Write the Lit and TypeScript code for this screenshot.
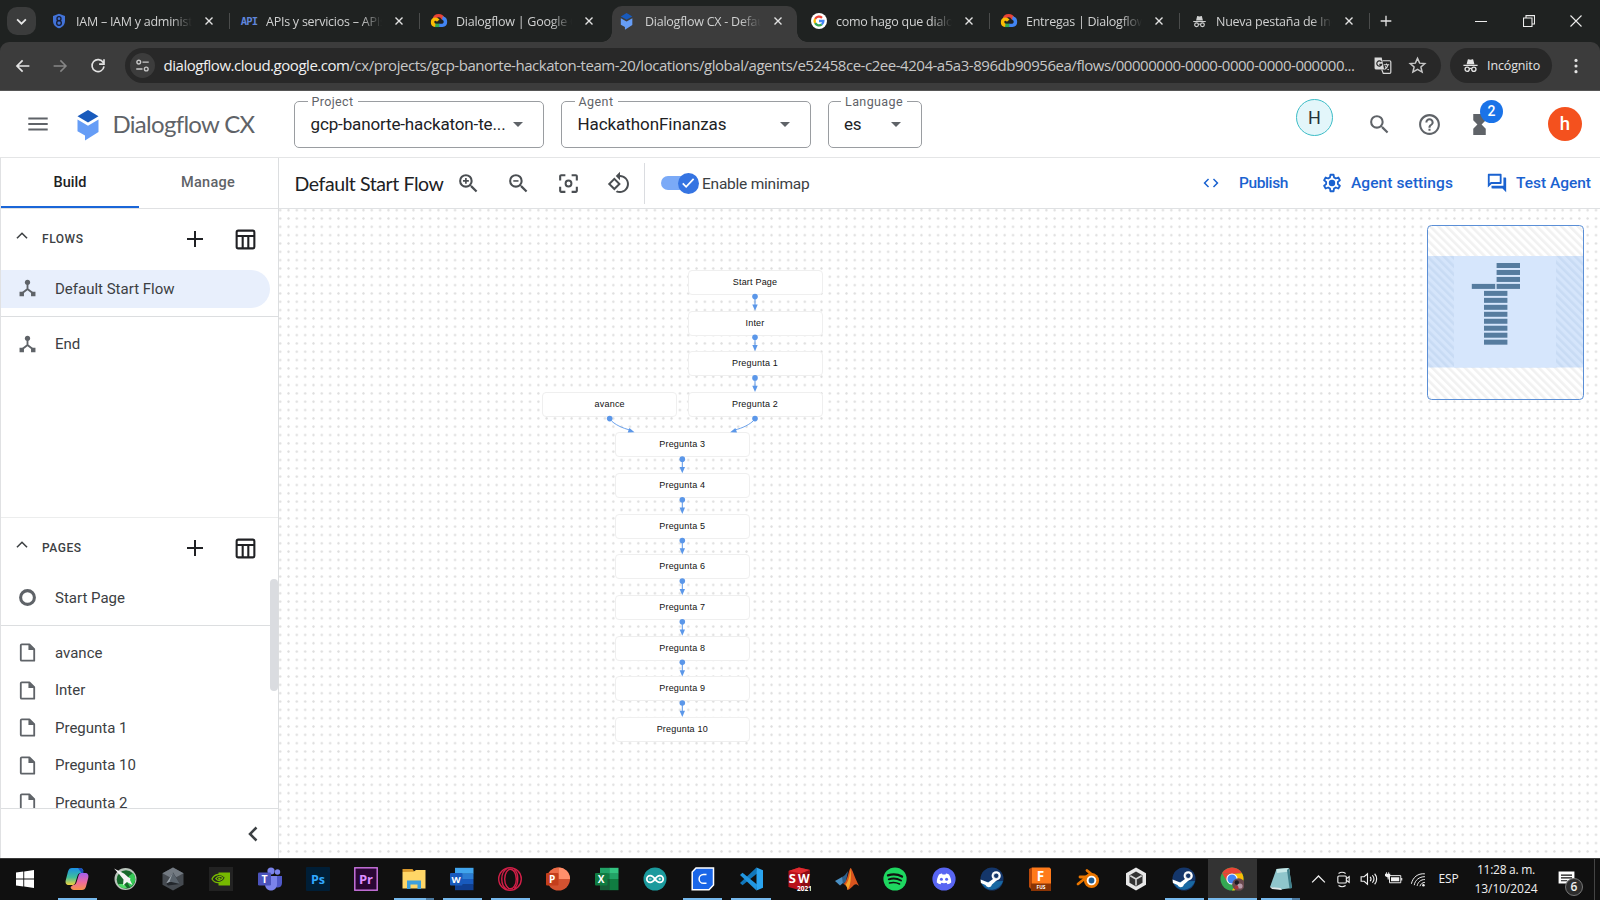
import { LitElement, html, svg, css } from "lit";
import { customElement, property, query } from "lit/decorators.js";
import { classMap } from "lit/directives/class-map.js";
import { styleMap } from "lit/directives/style-map.js";

/** Single line of text whose tracking is adjusted so that it fills `span` pixels. */
@customElement("fit-label")
class FitLabel extends LitElement {
  @property({ type: Number }) span = 0;
  @query(".line") line!: HTMLElement;
  static styles = css`
    :host { display: inline-block; white-space: nowrap; }
    .line { display: inline-block; }
  `;
  firstUpdated() {
    requestAnimationFrame(() => {
      const natural = this.line.getBoundingClientRect().width;
      const count = (this.textContent ?? "").trim().length || 1;
      this.line.style.letterSpacing = `${(this.span - natural) / count}px`;
    });
  }
  render() {
    return html`<span class="line"><slot></slot></span>`;
  }
}

const fit = (span: number, text: string) => html`<fit-label span=${span}>${text}</fit-label>`;

const icon = (size: number, body: unknown, box = 24) => html`
  <svg width=${size} height=${size} viewBox="0 0 ${box} ${box}" fill="currentColor">${body}</svg>`;

const LENS = "M15.5 14h-.79l-.28-.27A6.471 6.471 0 0 0 16 9.5 6.5 6.5 0 1 0 9.5 16c1.61 0 3.09-.59 4.23-1.57l.27.28v.79l5 4.99L20.49 19l-4.99-5zm-6 0C7.01 14 5 11.99 5 9.5S7.01 5 9.5 5 14 7.01 14 9.5 11.99 14 9.5 14z";

const g = {
  search: svg`<path d=${LENS}/>`,
  zoomIn: svg`<path d=${LENS}/><path d="M12.3 10.3h-2v2H8.7v-2h-2V8.7h2v-2h1.6v2h2z"/>`,
  zoomOut: svg`<path d=${LENS}/><path d="M7 8.8h5v1.5H7z"/>`,
  focus: svg`<path d="M5 15H3v4c0 1.100.9 2 2 2h4v-2H5v-4zM5 5h4V3H5c-1.100 0-2 .9-2 2v4h2V5zm14-2h-4v2h4v4h2V5c0-1.100-.9-2-2-2zm0 16h-4v2h4c1.100 0 2-.9 2-2v-4h-2v4z"/><circle cx="12" cy="12" r="2.800" fill="none" stroke="currentColor" stroke-width="1.900"/>`,
  rotate: svg`<path d="M7.340 6.410L.86 12.900l6.490 6.480 6.490-6.480-6.500-6.490zM3.690 12.900l3.660-3.660L11 12.900l-3.660 3.660-3.650-3.660zm15.670-6.260C17.610 4.880 15.300 4 13 4V.76L8.760 5 13 9.240V6c1.790 0 3.580.68 4.950 2.050 2.730 2.730 2.730 7.170 0 9.900C16.580 19.320 14.790 20 13 20c-.97 0-1.940-.21-2.840-.61l-1.490 1.490C10.020 21.620 11.510 22 13 22c2.300 0 4.610-.88 6.360-2.640 3.520-3.510 3.520-9.210 0-12.720z"/>`,
  code: svg`<path d="M9.400 16.600L4.800 12l4.600-4.600L8 6l-6 6 6 6 1.400-1.400zm5.200 0l4.600-4.600-4.600-4.600L16 6l6 6-6 6-1.400-1.400z"/>`,
  gear: svg`<path fill="none" stroke="currentColor" stroke-width="2" stroke-linejoin="round" d="M10.300 3h3.400l.5 2.900 2 1.200 2.700-1.100 1.700 3-2.200 1.800v2.400l2.200 1.800-1.700 3-2.700-1.100-2 1.200-.5 2.900h-3.400l-.5-2.900-2-1.200L5.100 18l-1.700-3 2.200-1.800v-2.400L3.400 9l1.700-3 2.700 1.100 2-1.200z"/><circle cx="12" cy="12" r="3.500"/>`,
  forum: svg`<path d="M15 4v7H5.170L4 12.170V4h11m1-2H3c-.55 0-1 .45-1 1v14l4-4h10c.55 0 1-.45 1-1V3c0-.55-.45-1-1-1zm5 4h-2v9H6v2c0 .55.45 1 1 1h11l4 4V7c0-.55-.45-1-1-1z"/>`,
  help: svg`<path d="M11 18h2v-2h-2v2zm1-16C6.480 2 2 6.480 2 12s4.480 10 10 10 10-4.480 10-10S17.520 2 12 2zm0 18c-4.410 0-8-3.590-8-8s3.590-8 8-8 8 3.590 8 8-3.590 8-8 8zm0-14c-2.210 0-4 1.790-4 4h2c0-1.100.9-2 2-2s2 .9 2 2c0 2-3 1.750-3 5h2c0-2.250 3-2.500 3-5 0-2.210-1.790-4-4-4z"/>`,
  hourglass: svg`<path d="M6 2v6l4 4-4 4v6h12v-6l-4-4 4-4V2z"/>`,
  menu: svg`<path d="M2.300 5.600h19.400v2H2.300zm0 5.400h19.400v2H2.300zm0 5.500h19.400v2H2.300z"/>`,
  plus: svg`<path d="M11 4h2v7h7v2h-7v7h-2v-7H4v-2h7z"/>`,
  table: svg`<g fill="none" stroke="currentColor" stroke-width="2"><rect x="3.500" y="3.500" width="17" height="17" rx="1.500"/><path d="M3.500 8.700h17M9.300 9v11.500M14.700 9v11.500"/></g>`,
  flow: svg`<circle cx="12" cy="5.500" r="2.700"/><path d="M3.700 15.500h4.600V20H3.700zM15.700 15.500h4.600V20h-4.600z"/><path d="M12 7v5.500L6 17.300M12 12.500l6 4.800" fill="none" stroke="currentColor" stroke-width="1.900"/>`,
  file: svg`<path d="M6 3.500h8l5 5v12H6a1 1 0 0 1-1-1v-15a1 1 0 0 1 1-1z" fill="none" stroke="currentColor" stroke-width="1.900" stroke-linejoin="round"/><path d="M13 3v6.500h6.500z"/>`,
  ring: svg`<circle cx="12" cy="12" r="7.200" fill="none" stroke="currentColor" stroke-width="3.200"/>`,
  up: svg`<path d="M6.500 14.500l5.500-5.500 5.500 5.500" fill="none" stroke="currentColor" stroke-width="1.700"/>`,
  left: svg`<path d="M15.500 5.500L9 12l6.500 6.500" fill="none" stroke="currentColor" stroke-width="2.500"/>`,
  close: svg`<path d="M6 6l12 12M18 6L6 18" stroke="currentColor" stroke-width="2.400"/>`,
  incognito: svg`<path d="M8.200 3.500c1.200-.6 2.300.5 3.800.5s2.600-1.100 3.800-.5l1.700 6.700h-11zM2 11h20v1.800H2z"/><g fill="none" stroke="currentColor" stroke-width="1.900"><circle cx="7.300" cy="17.200" r="3"/><circle cx="16.700" cy="17.200" r="3"/><path d="M10.300 16.600c1-.7 2.400-.7 3.400 0"/></g>`,
  dialogflow: svg`<path fill="#185abc" d="M12 0l10.500 6.200L12 12.500 1.500 6.200z"/><path fill="#669df6" d="M1.500 9.600L12 15.700l10.500-6.100V22L9 30.500v-5L1.500 21.300z"/>`,
  cloud: svg`<g fill="none" stroke-width="4.600"><path stroke="#ea4335" d="M6 8.500C7.500 4 15 3 17.500 9"/><path stroke="#4285f4" d="M16.500 8c5.500 1 5.500 9.500 0 9.800H12"/><path stroke="#34a853" d="M12.500 17.800H6.500"/><path stroke="#fbbc04" d="M7 17.800C2 17 2.500 9.500 7 9.500c2 0 3 .8 4 2"/></g>`,
  shield: svg`<path fill="#4273d8" d="M12 1l9 3.500V12c0 5.500-4 9.500-9 11-5-1.500-9-5.500-9-11V4.500z"/><g fill="none" stroke="#151d35" stroke-width="2"><circle cx="12" cy="8.500" r="3"/><circle cx="12" cy="15" r="3.500"/></g>`,
  google: svg`<circle cx="12" cy="12" r="12" fill="#fff"/><g fill="none" stroke-width="3.400"><path stroke="#ea4335" d="M6.200 8.800A6.700 6.700 0 0 1 16.500 7.200"/><path stroke="#fbbc04" d="M6.200 8.800a6.700 6.700 0 0 0 0 6.400"/><path stroke="#34a853" d="M6.200 15.200a6.700 6.700 0 0 0 10 1.900"/><path stroke="#4285f4" d="M16.200 17.100A6.500 6.500 0 0 0 18.600 12H12"/></g>`,
};

const steamArt = svg`<circle cx="12" cy="12" r="11.500" fill="#14366a"/><path d="M1 15a11.500 11.500 0 0 0 22-1z" fill="#1b7dba" opacity=".7"/><path d="M.6 12.500l7.600 3 5.800-4.200 2.800 2-4.800 4.200a3.400 3.400 0 0 1-6.500.6L.9 16z" fill="#fff"/><circle cx="16.200" cy="8.800" r="4.600" fill="#fff"/><circle cx="16.200" cy="8.800" r="2.700" fill="#14366a" stroke="#fff" stroke-width=".8"/>`;

const apps: { art: unknown; open?: boolean; active?: boolean; stacked?: boolean }[] = [
  { open: true, art: svg`<defs><linearGradient id="cpa" x1="0" y1="0" x2="0" y2="1"><stop offset="0" stop-color="#1b8fe6"/><stop offset=".55" stop-color="#3fbf9b"/><stop offset="1" stop-color="#f2d23c"/></linearGradient><linearGradient id="cpb" x1="0" y1="0" x2="0" y2="1"><stop offset="0" stop-color="#a45ff0"/><stop offset=".55" stop-color="#f06a9c"/><stop offset="1" stop-color="#f7934a"/></linearGradient></defs><path fill="url(#cpa)" d="M7 1h8c2 0 3 1 3.500 3L16 6c-2 0-3 1-3.600 3l-2 6.500C9.800 17.500 8.500 18 7 18H4c-2.800 0-4-2-3.200-5L3 4.500C3.700 2 5 1 7 1z"/><path fill="url(#cpb)" d="M17 6h3c2.800 0 4 2 3.200 5L21 19.500c-.7 2.500-2 3.500-4 3.500H9c-2 0-3-1-3.500-3L8 18c2 0 3-1 3.600-3l2-6.500C14.200 6.500 15.500 6 17 6z"/><path fill="#1d4fbd" d="M13 1h2c2 0 3 1 3.500 5h-2z"/>` },
  { art: svg`<circle cx="12.500" cy="12" r="11" fill="#b9c4bb"/><circle cx="13" cy="12.500" r="9.300" fill="#17692c"/><path d="M20 6a9 9 0 0 1-3 14l-3-5 2-6z" fill="#35c955"/><path d="M5 17c2 4 6 5 9 4l-3-4z" fill="#51dd68"/><path fill="#f4f4f4" d="M1 1.500l10 5 4 3.500 2.500 1.500-.5 1.500 2.500 5-5.500-3-4 3.500.5-6-4-5z"/>` },
  { art: svg`<path fill="#454a50" d="M12 .5l10.500 5.700v11.600L12 23.500 1.500 17.800V6.200z"/><path fill="#737a82" d="M12 .5l10.500 5.700L12 12 1.500 6.200z"/><path fill="#23272c" d="M12 5.500l7 11.500-12 1.500-2-2z"/><path fill="#9aa3ab" d="M12 5.500L5 16.500l7-3z"/><path fill="#5a636c" d="M12 5.500l-3.500 9L19 17z"/>` },
  { art: svg`<path fill="#222" d="M0 0h24v24H0z"/><path fill="#76b900" d="M9.500 5.500H21v13H9.500z"/><path d="M3 12c2.500-5.500 9-6 13.500-1.500C13 17 6 17 3 12zm3.800-.3c2-2.700 5-3 7-.8-1.800 3.200-5 3.400-7 .8z" fill="#222" stroke="#76b900" stroke-width="1.300"/><circle cx="10.300" cy="11.600" r="1.200" fill="#76b900"/>` },
  { art: svg`<circle cx="19.500" cy="5" r="2.700" fill="#7b83eb"/><circle cx="13" cy="4" r="3.600" fill="#7b83eb"/><path d="M17 9h7v7c0 3-2 4.500-4.500 4.500S16 18 16 16z" fill="#5059c9"/><path d="M7 9h12v8c0 4-2.500 6.500-6 6.500S7 21 7 17z" fill="#7b83eb"/><rect x="0" y="5.500" width="13" height="13" rx="1.300" fill="#4b53bc"/><text x="6.500" y="16" text-anchor="middle" class="lt" font-size="10.500" fill="#fff">T</text>` },
  { art: svg`<rect width="24" height="24" rx="1" fill="#001e36"/><text x="12" y="16.500" text-anchor="middle" class="lt" font-size="12.500" fill="#31a8ff">Ps</text>` },
  { art: svg`<rect x=".8" y=".8" width="22.400" height="22.400" fill="#2a0634" stroke="#d077e6" stroke-width="1.400"/><text x="12" y="16.500" text-anchor="middle" class="lt" font-size="13" fill="#dd8cff">Pr</text>` },
  { open: true, stacked: true, art: svg`<path fill="#d9982b" d="M.5 2h10l2 3H.5z"/><path fill="#ffd667" d="M.5 5l11-.2L14 3h9.500v18.500H.5z"/><path fill="#3d9fdc" d="M5 13.500h14V22h-3.500v-4.500h-7V22H5z"/>` },
  { open: true, art: svg`<path fill="#41a5ee" d="M5 .8h18.500v6H5z"/><path fill="#2b7cd3" d="M5 6.500h18.500V12H5z"/><path fill="#185abd" d="M5 12h18.500v5.700H5z"/><path fill="#103f91" d="M5 17.500h18.500v5.700H5z"/><rect x="0" y="6" width="12.500" height="12.500" rx="1" fill="#185abd"/><text x="6.200" y="15.800" text-anchor="middle" class="lt" font-size="9.500" fill="#fff">W</text>` },
  { open: true, art: svg`<g fill="none" stroke="#d21f48" stroke-width="1.400"><circle cx="12" cy="12" r="11.300"/><ellipse cx="12.500" cy="12" rx="5.800" ry="9.800"/><path d="M16 2.500c5 3 5 16 0 19M9 1.500c-7 4-7 17 0 21"/></g>` },
  { art: svg`<circle cx="12.500" cy="12" r="11.500" fill="#d35230"/><path fill="#ff8f6b" d="M12.500.5A11.500 11.500 0 0 1 24 12H12.500z"/><path fill="#ed6c47" d="M12.500.5V12H1A11.500 11.500 0 0 1 12.500.5z"/><rect x="0" y="6" width="12.500" height="12.500" rx="1" fill="#c43e1c"/><text x="6.200" y="16" text-anchor="middle" class="lt" font-size="10" fill="#fff">P</text>` },
  { art: svg`<path fill="#21a366" d="M5 .8h9.500v6H5z"/><path fill="#33c481" d="M14.300.8h9.200v6h-9.200z"/><path fill="#107c41" d="M5 6.700h9.500V12H5z"/><path fill="#21a366" d="M14.300 6.700h9.200V12h-9.200z"/><path fill="#185c37" d="M5 12h9.500v11.200H5z"/><path fill="#107c41" d="M14.300 12h9.200v11.200h-9.200z"/><rect x="0" y="6" width="12.500" height="12.500" rx="1" fill="#107c41"/><text x="6.200" y="15.800" text-anchor="middle" class="lt" font-size="10" fill="#fff">X</text>` },
  { art: svg`<circle cx="12" cy="12" r="11.500" fill="#1b9a9d"/><g fill="none" stroke="#fff" stroke-width="1.800"><path d="M12 12c-2-3-3.500-3.400-4.800-3.400a3.400 3.400 0 0 0 0 6.800c1.300 0 2.800-.4 4.800-3.400 2-3 3.500-3.400 4.800-3.400a3.400 3.400 0 0 1 0 6.800c-1.300 0-2.800-.4-4.800-3.400z"/></g><path d="M6 12h2.500M15.500 12H18M16.800 10.800v2.400" stroke="#fff" stroke-width=".8"/>` },
  { open: true, art: svg`<path fill="#1a66e8" stroke="#fff" stroke-width="1.500" d="M5 1h17.500v17L18 22.800H1.200V5z"/><path d="M15.500 7.500h-3a4.300 4.300 0 0 0 0 8.800h3" fill="none" stroke="#fff" stroke-width="1.500"/>` },
  { open: true, art: svg`<path fill="#1177bb" d="M17.500.5L1 16l2.500 2.200L18 6.500z"/><path fill="#2196e0" d="M17.500 23.500L1 8l2.500-2.200L18 17.500z"/><path fill="#2aa4f0" d="M17.500.5L24 3.200v17.600l-6.500 2.700z"/>` },
  { art: svg`<path fill="#b8121b" d="M1.500 4L12 .5 23 3v17l-9 3.500L1.500 20z"/><path fill="#df2a2f" d="M1.500 4L12 .5 23 3l-9 3.500z"/><path fill="#8f0d14" d="M14 6.500L23 3v17l-9 3.500z"/><text x="1.800" y="16" class="lt" font-size="13" fill="#fff">S</text><text x="11" y="15.500" class="lt" font-size="12" fill="#fff">W</text><text x="10" y="24" class="lt" font-size="6.500" fill="#fff">2021</text>` },
  { art: svg`<path fill="#4a90c4" d="M0 14l7-4 4 3.500-6 5z"/><path fill="#2f5f8c" d="M7 10c3-1 4-4 6-6l-2 10.500L8 17z"/><path fill="#d9541e" d="M15.500 1C17 1 19 9 24 19c-3-2.500-4-2-6.500.5C15 22 13.500 23 12.500 23c0-3-2-5.500-4-6 4-2 5-14 7-16z"/><path fill="#f5a52e" d="M15.500 1c-.5 5-1 12-5 17 1 1 2 2.500 2 5 3-4 4-12 3-22z"/>` },
  { art: svg`<circle cx="12" cy="12" r="11.600" fill="#1ed760"/><g fill="none" stroke="#111" stroke-linecap="round"><path d="M5 8.300c5-1.500 10-1 14 1.300" stroke-width="2.300"/><path d="M5.800 12.300c4.300-1.300 8.600-.8 12.200 1.200" stroke-width="1.900"/><path d="M6.500 16c3.600-1 7-.6 10 1" stroke-width="1.600"/></g>` },
  { art: svg`<circle cx="12" cy="12" r="11.600" fill="#5865f2"/><path fill="#fff" d="M7 7.500c1.500-.9 2.500-1 3-1l.5 1h3l.5-1c.5 0 1.500.1 3 1 1.500 2.500 2.300 5.200 2.200 8-1.200 1-2.400 1.500-3.700 1.800l-.8-1.500c-1.600.5-3.800.5-5.400 0l-.8 1.500c-1.300-.3-2.500-.8-3.700-1.800C4.700 12.700 5.500 10 7 7.500z"/><circle cx="9.400" cy="12.300" r="1.500" fill="#5865f2"/><circle cx="14.600" cy="12.300" r="1.500" fill="#5865f2"/>` },
  { art: steamArt },
  { art: svg`<path fill="#b9480a" d="M1 2l3-1.500V23L1 20z"/><path fill="#ff7a1a" d="M4 .5h17.500L23 2v21H4z"/><path fill="#8b3404" d="M3 16.500h20V24H3z"/><text x="12.500" y="14" text-anchor="middle" class="lt" font-size="13.500" fill="#fff">F</text><text x="13" y="22" text-anchor="middle" class="lt" font-size="4.800" fill="#fff">FUS</text>` },
  { art: svg`<path d="M2 17L14 7.500M4 10h9M11 3.500l8 6.500" stroke="#ea7600" stroke-width="2.800" stroke-linecap="round"/><circle cx="15.500" cy="13.500" r="7.600" fill="#ea7600"/><circle cx="15.500" cy="13.500" r="4.800" fill="#fff"/><circle cx="15.500" cy="13.500" r="2.900" fill="#1f5d93"/>` },
  { art: svg`<path fill="#e8e8e8" d="M12 .5l10 5.700v11.600l-10 5.700-10-5.700V6.200z"/><path fill="#333" d="M12 4.500l6.500 3.700v7.600L12 19.500l-6.500-3.700V8.200z"/><path d="M12 12v6.500M12 12L6.300 8.700M12 12l5.700-3.300" stroke="#d6d6d6" stroke-width="1.600" fill="none"/>` },
  { open: true, art: steamArt },
  { open: true, active: true, art: svg`<circle cx="12" cy="12" r="11.500" fill="#34a853"/><path fill="#ea4335" d="M2.100 6.200A11.500 11.500 0 0 1 22 6.200L12 7z"/><path fill="#ea4335" d="M2.100 6.200L7.500 15 12 7z"/><path fill="#fbbc04" d="M22 6.300A11.500 11.500 0 0 1 12 23.500l5-8.500-4-8z"/><circle cx="12" cy="12" r="5.600" fill="#fff"/><circle cx="12" cy="12" r="4.500" fill="#4285f4"/><circle cx="18.500" cy="17.500" r="6.300" fill="#6a4a4f"/><circle cx="16.800" cy="15.500" r="2.200" fill="#1c1a20"/><circle cx="20" cy="19" r="2.600" fill="#b79aa8"/><circle cx="16.500" cy="20.500" r="2" fill="#a3353d"/>` },
  { open: true, stacked: true, art: svg`<path fill="#8fc6cc" d="M7.500 2L20 1l3 20-11.500 1.500L1 20z"/><path fill="#c7e8e8" d="M7.500 2L20 1l.6 3.500L8 6z"/><path fill="#3f7f8a" d="M20 1l3 20-2.500.5L18 3z"/><path fill="#dfe9ea" d="M1 20l10.500 1 1.500 2L3 22z"/>` },
];

interface FlowNode { label: string; cx: number; cy: number; }
const STEP = 40.64;
const nodes: FlowNode[] = [
  ...["Start Page", "Inter", "Pregunta 1", "Pregunta 2"].map((label, i) => ({ label, cx: 755, cy: 282.1 + i * STEP })),
  { label: "avance", cx: 609.7, cy: 282.1 + 3 * STEP },
  ...[3, 4, 5, 6, 7, 8, 9, 10].map((n, i) => ({ label: `Pregunta ${n}`, cx: 682.3, cy: 282.1 + (i + 4) * STEP })),
];
const ORIGIN_X = 279, ORIGIN_Y = 209;

@customElement("app-root")
class AppRoot extends LitElement {
  static styles = css`
    :host { display: flex; flex-direction: column; width: 1600px; height: 900px; overflow: hidden; background: #fff; font-family: Roboto, "Liberation Sans", sans-serif; color: #202124; }
    * { box-sizing: border-box; }
    svg { display: block; flex: none; }
    .lt { font-family: "Open Sans", sans-serif; font-weight: 700; }
    .cell { display: flex; align-items: center; justify-content: center; flex: none; }

    .tabs { display: flex; height: 42px; flex: none; background: #1f2221; color: #d0d1d1; font: 12.500px/43px "Open Sans", sans-serif; }
    .tabmenu { width: 29px; height: 28px; margin: 7px 4px 0 7px; border-radius: 10px; background: #3b3c3c; color: #e8e8e8; }
    .tab { position: relative; display: flex; align-items: center; width: 190px; padding: 0 10px 0 11px; flex: none; }
    .tab .fav { width: 16px; margin-right: 9px; }
    .tab .name { width: 117px; overflow: hidden; white-space: nowrap; letter-spacing: -.25px; -webkit-mask-image: linear-gradient(90deg, #000 82%, transparent 100%); mask-image: linear-gradient(90deg, #000 82%, transparent 100%); }
    .tab .x { width: 22px; margin-left: 6px; color: #e3e3e3; }
    .tab.line::after { content: ""; position: absolute; right: 0; top: 13px; width: 1.500px; height: 16px; background: #4a4c4b; }
    .tab.on { height: 36px; margin: 6px -1px 0 2px; width: 185px; border-radius: 10px 10px 0 0; background: #3c3c3c; line-height: 31px; padding: 0 7px 6px 8px; }
    .tab.on .name { width: 116px; }
    .tab.on + .tab { margin-left: 4px; }
    .tab.on::before, .tab.on::after { content: ""; position: absolute; bottom: 0; width: 10px; height: 10px; }
    .tab.on::before { left: -10px; background: radial-gradient(circle at 0 0, transparent 9.500px, #3c3c3c 10px); }
    .tab.on::after { right: -10px; background: radial-gradient(circle at 100% 0, transparent 9.500px, #3c3c3c 10px); }
    .api { font: 700 10.500px/1 "DejaVu Sans Mono", monospace; color: #5f86dc; letter-spacing: -.8px; }
    .newtab { width: 32px; color: #e3e3e3; }
    .wins { display: flex; margin-left: auto; color: #ececec; }
    .wins .cell { width: 47.500px; height: 42px; }
    .toolbarwrap { background: #1f2221; flex: none; }
    .toolbar { display: flex; align-items: center; height: 49px; padding-bottom: 1px; background: #3c3c3c; border-bottom: 1px solid #565656; border-radius: 9px 9px 0 0; color: #e3e3e3; }
    .toolbar .nav { width: 37.500px; }
    .toolbar .nav:first-child { margin-left: 4px; }
    .dim { color: #868686; }
    .omni { display: flex; align-items: center; width: 1317px; height: 35px; margin-left: 8px; padding-left: 5px; border-radius: 18px; background: #282828; font: 15px/35px "Open Sans", sans-serif; color: #c7c7c7; }
    .omni b { font-weight: 400; color: #f0f0f0; }
    .omni .site { width: 25px; height: 25px; border-radius: 50%; background: #3c3c3c; margin-right: 9px; }
    .omni .url { width: 1201px; }
    .omni .act { width: 35px; }
    .incog { display: flex; align-items: center; width: 102px; height: 35px; margin-left: 9px; padding-left: 12px; border-radius: 18px; background: #282828; font: 12.500px/35px "Open Sans", sans-serif; gap: 8px; }
    .more { width: 48px; }

    .header { display: flex; align-items: center; height: 67px; flex: none; border-bottom: 1px solid #e4e5e6; background: #fff; color: #5f6368; }
    .burger { width: 48px; margin-left: 13.500px; }
    .brand { display: flex; align-items: center; margin-left: 14px; width: 218.500px; font: 24px/32px Lato, sans-serif; color: #5f6368; gap: 13px; }
    .brand svg { margin-top: 4px; }
    fieldset { display: flex; align-items: center; justify-content: space-between; height: 53px; margin: -6px 17px 0 0; padding: 0 20px 7px 15.500px; border: 1px solid #9a9da1; border-radius: 5px; font-size: 17px; color: #202124; min-width: 0; }
    .field { flex: none; width: 250px; }
    .field.lang { width: 94px; margin-left: -.500px; }
    legend { padding: 0 4px; margin-left: -3px; font-size: 12.500px; line-height: 14px; color: #5f6368; }
    .arrow { width: 0; border: 5px solid transparent; border-top-color: #5f6368; border-bottom: 0; }
    .hav { width: 37px; height: 37px; border: 1px solid #3dbdc7; border-radius: 50%; background: #e3f6fa; font-size: 18px; color: #263238; margin: -13px 34px 0 357.500px; }
    .hh { width: 24px; margin-right: 26px; }
    .wait { position: relative; width: 24px; margin-right: 57px; }
    .badge { position: absolute; left: 13px; top: -12px; width: 23px; height: 23px; border-radius: 50%; background: #1a73e8; color: #fff; font-size: 14px; font-weight: 500; }
    .me { width: 34px; height: 34px; border-radius: 50%; background: #f4511e; color: #fff; font-size: 18.500px; font-weight: 500; }

    .body { display: flex; flex: none; height: 700px; }
    .side { display: flex; flex-direction: column; width: 279px; flex: none; border-left: 1px solid #e0e1e3; border-right: 1px solid #dcdee0; color: #3c4043; font-size: 15px; }
    .modes { display: flex; height: 51px; flex: none; border-bottom: 1px solid #e0e1e3; font: 500 14.500px/50px Roboto, sans-serif; color: #5f6368; text-align: center; }
    .modes div { width: 138px; height: 50px; }
    .modes .on { border-bottom: 2.500px solid #1a66d8; color: #202124; }
    .sec { display: flex; align-items: center; height: 60px; margin-bottom: 1px; flex: none; padding-left: 9px; font-size: 12px; font-weight: 500; }
    .sec .up { width: 24px; margin: -7px 8px 0 0; }
    .sec .nm { width: 142px; flex: none; }
    .sec .ac { width: 22px; margin-right: 28px; color: #202124; }
    .row { display: flex; align-items: center; height: 37.500px; flex: none; padding-left: 15px; color: #3c4043; }
    .row svg { margin-right: 16px; color: #5f6368; }
    .row.on { width: 269px; background: #e8effc; border-radius: 0 19px 19px 0; }
    .rule { height: 1px; flex: none; background: #dcdee0; }
    .flows { height: 309px; flex: none; border-bottom: 1px solid #eceded; }
    .flows .rule { margin: 8.500px 0; }
    .pages { display: flex; flex-direction: column; height: 291px; flex: none; overflow: hidden; border-bottom: 1px solid #dcdee0; }
    .list { position: relative; display: flex; flex-direction: column; flex: 1; overflow: hidden; }
    .list .rule { margin: 8px 8px 8.500px 0; }
    .thumb { position: absolute; right: 0; top: 0; width: 8px; height: 112px; border-radius: 4px; background: #dadce0; }
    .foot { display: flex; align-items: center; justify-content: flex-end; flex: 1; padding-right: 13px; }

    .main { display: flex; flex-direction: column; flex: 1; min-width: 0; }
    .bar { display: flex; align-items: center; height: 51px; flex: none; border-bottom: 1px solid #dfe1e3; padding-left: 15.500px; color: #4a4e52; }
    .title { width: 161px; font: 19.500px/51px Lato, sans-serif; color: #202124; }
    .tool { width: 26px; margin-right: 24px; }
    .vr { width: 1px; height: 41px; background: #dadce0; margin: 0 16px 0 -11.500px; }
    .toggle { position: relative; width: 32px; height: 14.500px; border-radius: 8px; background: #7baaf7; margin-right: 9px; }
    .knob { position: absolute; left: 16.500px; top: -3px; width: 21px; height: 21px; border-radius: 50%; background: #3574e2; }
    .mini-t { width: 498px; font-size: 15.500px; line-height: 20px; padding-top: 1px; color: #3c4043; }
    .act-t { display: flex; align-items: center; flex: none; font: 500 15.500px/50px Roboto, sans-serif; color: #1a62d0; }
    .act-t .ic { width: 22px; }
    .a0 { margin-right: 17px; } .a1 { margin-right: 33px; } .a2 { margin-right: 33px; gap: 8px; } .a3 { gap: 8px; }

    .canvas { position: relative; flex: 1; background: #fff radial-gradient(circle, #dedede 0, #e1e1e1 .9px, transparent 1.500px) -3px -3px / 8.333px 8.333px; }
    .edges { position: absolute; left: 0; top: 0; }
    .node { position: absolute; width: 135px; height: 25px; border: 1px solid #efefef; border-radius: 4px; background: #fff; font: 9px/23px "Liberation Sans", sans-serif; letter-spacing: .2px; text-align: center; color: #111; }
    .minimap { position: absolute; right: 16px; top: 16px; }

    .taskbar { display: flex; height: 42px; flex: none; background: #101010; border-top: 1px solid #3a3a3a; color: #f0f0f0; }
    .start { width: 50px; margin-right: 3px; padding-bottom: 1px; }
    .app { position: relative; width: 48.150px; flex: none; padding-bottom: 2px; }
    .app::after { content: ""; position: absolute; left: 4.500px; right: 4.500px; bottom: 0; height: 0; background: #76b9ed; }
    .app.open::after { height: 2.500px; }
    .app.active { background: #333; }
    .app.active::after { left: 0; right: 0; }
    .app.stacked::after { background: linear-gradient(90deg, #76b9ed 79%, #4c7ba2 79%); }
    .tray { display: flex; align-items: center; margin-left: auto; padding-bottom: 1px; font: 12.500px/1 "Open Sans", sans-serif; }
    .tray .t { width: 25px; }
    .lang2 { width: 35px; font-size: 12px; }
    .clock { display: flex; flex-direction: column; align-items: center; width: 80px; line-height: 19px; font-size: 12px; }
    .note { position: relative; width: 49px; border-right: 1px solid #444; height: 41px; padding-right: 8px; margin-right: 5px; }
    .count { position: absolute; left: 19px; top: 19px; width: 18px; height: 18px; border-radius: 50%; background: #2c2c2c; border: 1px solid #777; font-weight: 600; font-size: 12px; }
  `;

  tab(art: unknown, name: string, size: number, cls: Record<string, boolean>, box = 24) {
    return html`<div class=${classMap({ tab: true, ...cls })}>
      <div class="cell fav">${typeof art === "string" ? html`<span class="api">${art}</span>` : icon(size, art, box)}</div>
      <div class="name">${name}</div>
      <div class="cell x">${icon(14, g.close)}</div>
    </div>`;
  }

  row(art: unknown, name: string, on = false) {
    return html`<div class=${classMap({ row: true, on })}>${icon(23, art)}<span>${name}</span></div>`;
  }

  section(name: string, w: number) {
    return html`<div class="sec">
      <div class="cell up">${icon(22, g.up)}</div>
      <div class="nm">${fit(w, name)}</div>
      <div class="cell ac">${icon(24, g.plus)}</div>
      <div class="cell ac">${icon(25, g.table)}</div>
    </div>`;
  }

  edges() {
    const down = nodes.filter((n) => !["Pregunta 2", "avance", "Pregunta 10"].includes(n.label));
    const C = "#5b97e9";
    return svg`
      ${down.map((n) => svg`<g transform="translate(${n.cx} ${n.cy})"><circle cx="0" cy="14.500" r="2.800" fill=${C}/><path d="M0 14V24" stroke=${C} stroke-width="1"/><path d="M-2.700 22.300h5.400L0 28.600z" fill=${C}/></g>`)}
      <g fill="none" stroke=${C} stroke-width=".9"><path d="M609.700 419c5 6 13 9 20 11"/><path d="M755 419c-5 6-13 9-20 11"/></g>
      <g fill=${C}><circle cx="609.700" cy="418.600" r="2.800"/><circle cx="755" cy="418.600" r="2.800"/><path d="M634.500 432.300l-6.800.2 1.700-4.500z"/><path d="M730.200 432.300l6.800.2-1.700-4.500z"/></g>`;
  }

  minimap() {
    const bars = [
      ...[0, 1, 2, 3].map((i) => [69.6, 38 + i * 6.97]),
      [44.8, 58.9],
      ...[4, 5, 6, 7, 8, 9, 10, 11].map((i) => [57, 38 + i * 6.97]),
    ];
    return html`<svg class="minimap" width="157" height="175" viewBox="0 0 157 175">
      <defs>
        <pattern id="hatch" width="5.800" height="5.800" patternUnits="userSpaceOnUse" patternTransform="rotate(-45)"><rect width="5.800" height="5.800" fill="#fff"/><rect width="2.600" height="5.800" fill="#f1f1f1"/></pattern>
        <pattern id="hatchb" width="5.800" height="5.800" patternUnits="userSpaceOnUse" patternTransform="rotate(-45)"><rect width="5.800" height="5.800" fill="#d5e5fb"/><rect width="2.600" height="5.800" fill="#c8dbf4"/></pattern>
      </defs>
      <rect x=".5" y=".5" width="156" height="174" rx="4" fill="url(#hatch)"/>
      <rect x="1" y="31" width="155" height="111.500" fill="url(#hatchb)"/>
      <rect x="27" y="31" width="102" height="111.500" fill="#d6e6fc"/>
      ${bars.map(([x, y]) => svg`<rect x=${x} y=${y} width="23.400" height="5" fill="#567c9f"/>`)}
      <rect x=".5" y=".5" width="156" height="174" rx="4" fill="none" stroke="#5b8fd6"/>
    </svg>`;
  }

  render() {
    return html`
      <div class="tabs">
        <div class="cell tabmenu">${icon(15, svg`<path d="M5 8.500l7 7 7-7" fill="none" stroke="currentColor" stroke-width="2.800"/>`)}</div>
        ${this.tab(g.shield, "IAM – IAM y administración", 16, { line: true })}
        ${this.tab("API", "APIs y servicios – APIs y servicios", 16, { line: true })}
        ${this.tab(g.cloud, "Dialogflow | Google Cloud", 18, {})}
        ${this.tab(g.dialogflow, "Dialogflow CX - Default Start Flow", 17, { on: true }, 31)}
        ${this.tab(g.google, "como hago que dialogflow", 16, { line: true })}
        ${this.tab(g.cloud, "Entregas | Dialogflow CX", 18, { line: true })}
        ${this.tab(g.incognito, "Nueva pestaña de Incógnito", 15, { line: true })}
        <div class="cell newtab">${icon(16, g.plus)}</div>
        <div class="wins">
          <div class="cell">${icon(12, svg`<path d="M0 6h12v1H0z"/>`, 12)}</div>
          <div class="cell">${icon(12, svg`<path d="M.5 3h8.500v8.500H.5zM3 3V.6h8.500V9H9" fill="none" stroke="currentColor" stroke-width="1.100"/>`, 12)}</div>
          <div class="cell">${icon(12, svg`<path d="M.5.5l11 11M11.500.5l-11 11" stroke="currentColor" stroke-width="1.100"/>`, 12)}</div>
        </div>
      </div>
      <div class="toolbarwrap"><div class="toolbar">
        <div class="cell nav">${icon(18, svg`<path d="M20.500 12H4.500M11.500 4.500L4 12l7.500 7.500" fill="none" stroke="currentColor" stroke-width="2.300"/>`)}</div>
        <div class="cell nav dim">${icon(18, svg`<path d="M3.500 12h16M12.500 4.500L20 12l-7.500 7.500" fill="none" stroke="currentColor" stroke-width="2"/>`)}</div>
        <div class="cell nav">${icon(18, svg`<path d="M19 7.500A8 8 0 1 0 20 12.500M20 3v6.500h-6.500" fill="none" stroke="currentColor" stroke-width="2.200"/>`)}</div>
        <div class="omni">
          <div class="cell site">${icon(15, svg`<g fill="none" stroke="currentColor" stroke-width="2.200"><circle cx="6" cy="6.500" r="3"/><circle cx="18" cy="17.500" r="3"/><path d="M12 6.500h10M2 17.500h10"/></g>`)}</div>
          <div class="url"><fit-label span="1191"><b>dialogflow.cloud.google.com</b>/cx/projects/gcp-banorte-hackaton-team-20/locations/global/agents/e52458ce-c2ee-4204-a5a3-896db90956ea/flows/00000000-0000-0000-0000-000000...</fit-label></div>
          <div class="cell act">${icon(19, svg`<path d="M2 2h9l3 15H4a2 2 0 0 1-2-2z" fill="#dadada"/><path d="M12 6h9a1.500 1.500 0 0 1 1.500 1.500V20.500A1.500 1.500 0 0 1 21 22h-8l-2-5" fill="none" stroke="#dadada" stroke-width="1.500"/><path d="M10.500 7.500A3.200 3.200 0 1 0 11 10.500H8" fill="none" stroke="#282828" stroke-width="1.500"/><path d="M13.500 11h7M17 9.500V11M19 11c-.5 3-2.500 5-4.500 6M15.500 13c1 2 2.500 3.500 4.500 4.500" fill="none" stroke="#dadada" stroke-width="1.300"/>`)}</div>
          <div class="cell act">${icon(19, svg`<path d="M12 3l2.700 6 6.500.6-4.900 4.300 1.500 6.400L12 16.900l-5.800 3.400 1.500-6.400-4.900-4.300 6.500-.6z" fill="none" stroke="currentColor" stroke-width="1.900"/>`)}</div>
        </div>
        <div class="incog">${icon(17, g.incognito)}${fit(53, "Incógnito")}</div>
        <div class="cell more">${icon(18, svg`<circle cx="12" cy="4.500" r="2.100"/><circle cx="12" cy="12" r="2.100"/><circle cx="12" cy="19.500" r="2.100"/>`)}</div>
      </div></div>

      <div class="header">
        <div class="cell burger">${icon(24, g.menu)}</div>
        <div class="brand"><svg width="24" height="34" viewBox="0 0 24 32">${g.dialogflow}</svg>${fit(142, "Dialogflow CX")}</div>
        <fieldset class="field"><legend>${fit(42, "Project")}</legend>${fit(195, "gcp-banorte-hackaton-te...")}<div class="arrow"></div></fieldset>
        <fieldset class="field"><legend>${fit(35, "Agent")}</legend>${fit(149, "HackathonFinanzas")}<div class="arrow"></div></fieldset>
        <fieldset class="field lang"><legend>${fit(58, "Language")}</legend>${fit(17.5, "es")}<div class="arrow"></div></fieldset>
        <div class="cell hav">H</div>
        <div class="cell hh">${icon(25, g.search)}</div>
        <div class="cell hh">${icon(25, g.help)}</div>
        <div class="cell wait">${icon(25, g.hourglass)}<div class="cell badge">2</div></div>
        <div class="cell me">h</div>
      </div>

      <div class="body">
        <div class="side">
          <div class="modes"><div class="on">${fit(33, "Build")}</div><div>${fit(54, "Manage")}</div></div>
          <div class="flows">
            ${this.section("FLOWS", 41.5)}
            ${this.row(g.flow, "Default Start Flow", true)}
            <div class="rule"></div>
            ${this.row(g.flow, "End")}
          </div>
          <div class="pages">
            ${this.section("PAGES", 39.5)}
            <div class="list">
              ${this.row(g.ring, "Start Page")}
              <div class="rule"></div>
              ${["avance", "Inter", "Pregunta 1", "Pregunta 10", "Pregunta 2"].map((n) => this.row(g.file, n))}
              <div class="thumb"></div>
            </div>
          </div>
          <div class="foot">${icon(24, g.left)}</div>
        </div>
        <div class="main">
          <div class="bar">
            <div class="title">${fit(149, "Default Start Flow")}</div>
            <div class="cell tool">${icon(25, g.zoomIn)}</div>
            <div class="cell tool">${icon(25, g.zoomOut)}</div>
            <div class="cell tool">${icon(25, g.focus)}</div>
            <div class="cell tool">${icon(24, g.rotate)}</div>
            <div class="vr"></div>
            <div class="toggle"><div class="cell knob">${icon(18, svg`<path d="M5 12.500l4.500 4.500L19.500 6.500" fill="none" stroke="#fff" stroke-width="2.300"/>`)}</div></div>
            <div class="mini-t">${fit(107.500, "Enable minimap")}</div>
            <div class="act-t a0"><div class="cell ic">${icon(18, g.code)}</div></div>
            <div class="act-t a1">${fit(49, "Publish")}</div>
            <div class="act-t a2"><div class="cell ic">${icon(22, g.gear)}</div>${fit(102, "Agent settings")}</div>
            <div class="act-t a3"><div class="cell ic">${icon(22, g.forum)}</div>${fit(75, "Test Agent")}</div>
          </div>
          <div class="canvas">
            ${nodes.map((n) => html`<div class="node" style=${styleMap({ left: `${n.cx - 67.5 - ORIGIN_X}px`, top: `${n.cy - 12.2 - ORIGIN_Y}px` })}>${n.label}</div>`)}
            <svg class="edges" width="1321" height="649" viewBox="${ORIGIN_X} ${ORIGIN_Y} 1321 649">${this.edges()}</svg>
            ${this.minimap()}
          </div>
        </div>
      </div>

      <div class="taskbar">
        <div class="cell start">${icon(18, svg`<path d="M0 2.500L7.300 1.500V8.500H0zM8.200 1.400L18 0v8.500H8.200zM0 9.500h7.300v7L0 15.500zM8.200 9.500H18V18l-9.800-1.400z" fill="#fff"/>`, 18)}</div>
        ${apps.map((a) => html`<div class=${classMap({ cell: true, app: true, open: !!a.open, active: !!a.active, stacked: !!a.stacked })}>${icon(24, a.art)}</div>`)}
        <div class="tray">
          <div class="cell t">${icon(17, svg`<path d="M3 16l9-9 9 9" fill="none" stroke="currentColor" stroke-width="1.800"/>`)}</div>
          <div class="cell t">${icon(17, svg`<g fill="none" stroke="currentColor" stroke-width="1.600"><rect x="4" y="7" width="12" height="10" rx="1.500"/><path d="M16 11l4-3v8l-4-3M5 3.500c3-2 7-2 10 0M5 20.500c3 2 7 2 10 0"/></g>`)}</div>
          <div class="cell t">${icon(18, svg`<g fill="none" stroke="currentColor" stroke-width="1.500"><path d="M1.500 9h4L10 5v14l-4.500-4h-4zM13.500 9c1.500 1.800 1.500 4.200 0 6M16.500 7c2.600 3 2.600 7 0 10M19.500 5c3.600 4 3.600 10 0 14"/></g>`)}</div>
          <div class="cell t">${icon(18, svg`<path d="M6 7.500h15v9.500H6z" fill="none" stroke="currentColor" stroke-width="1.300"/><path d="M8 9.500h11v5.500H8zM21.500 10.500H23v3.500h-1.500zM0 5h1.500V3h1.200v2h1.600V3h1.200v2H7v3L5 10v2.500H3.500V10L0 8z"/>`)}</div>
          <div class="cell t">${icon(17, svg`<g fill="none" stroke="currentColor" stroke-width="1.400"><path d="M2 18C4 9 11 3 21 4M6 20c1-7 7-12 15-12M10 21c1-5 5-9 11-9M14 21.500c1-3 3-5 7-5.500"/></g><circle cx="19" cy="20" r="1.800"/>`)}</div>
          <div class="cell lang2">${fit(20, "ESP")}</div>
          <div class="clock">${fit(58, "11:28 a. m.")}${fit(63, "13/10/2024")}</div>
          <div class="cell note">${icon(19, svg`<path d="M2 2h20v15h-5v5l-6-5H2z" fill="#fff"/><path d="M5 6.500h14M5 10h14M5 13.500h8" stroke="#101010" stroke-width="1.400"/>`)}<div class="cell count">6</div></div>
        </div>
      </div>
    `;
  }
}
